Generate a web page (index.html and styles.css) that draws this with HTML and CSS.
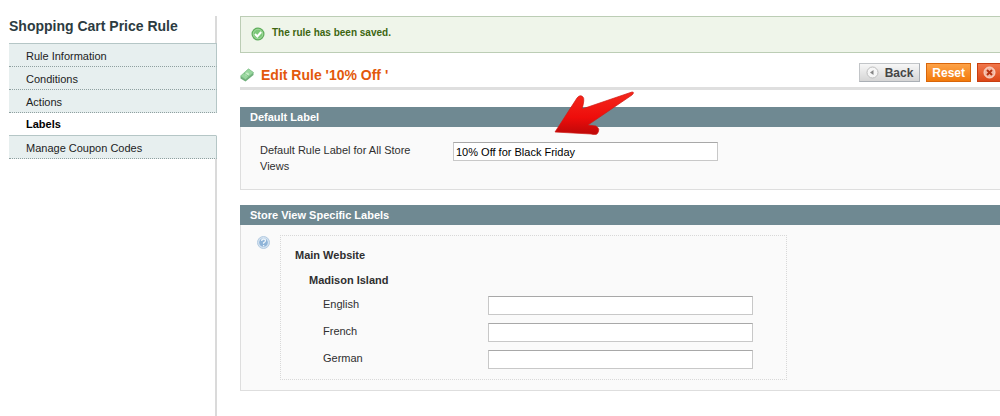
FILE: index.html
```html
<!DOCTYPE html>
<html lang="en">
<head>
    <meta charset="UTF-8">
    <meta name="viewport" content="width=device-width, initial-scale=1.0">
    <title>Edit Rule</title>
    <link rel="stylesheet" href="styles.css">
</head>
<body>
    <div class="page">
        <aside class="sidebar">
            <h3>Shopping Cart Price Rule</h3>
            <nav class="tabs">
                <a href="#">Rule Information</a>
                <a href="#">Conditions</a>
                <a href="#">Actions</a>
                <a href="#" class="active">Labels</a>
                <a href="#">Manage Coupon Codes</a>
            </nav>
        </aside>

        <main class="content">
            <div class="message">
                <svg width="14" height="14" viewBox="0 0 14 14">
                    <circle cx="7" cy="7" r="6.5" fill="#5fae5c"/>
                    <circle cx="7" cy="7" r="4.8" fill="#7cc878" stroke="#a5dba0"/>
                    <path d="M4 7l2.3 2.4L10.2 5" fill="none" stroke="#fff" stroke-width="2"/>
                </svg>
                <span>The rule has been saved.</span>
            </div>

            <div class="content-header">
                <svg width="14" height="14" viewBox="0 0 14 14">
                    <path d="M.5 8.5L8.5 1l5 3.5V7l-8 6.5-5-3z" fill="#6fae7a"/>
                    <path d="M.5 8L8.5.8l5 3.7-8 7z" fill="#98d69e" stroke="#7dbd86" stroke-width=".6"/>
                    <ellipse cx="7" cy="6.2" rx="2" ry="1.6" fill="#c4ecc4"/>
                    <path d="M4 5l5 3.6" stroke="#6fb679" stroke-width=".7"/>
                </svg>
                <h2>Edit Rule '10% Off '</h2>
                <div class="actions">
                    <button type="button" class="btn back">
                        <svg width="13" height="13" viewBox="0 0 13 13">
                            <circle cx="6.5" cy="6.5" r="5.5" fill="#f6f6f6" stroke="#bdbdbd"/>
                            <path d="M4 6.5L7.5 4v5z" fill="#858585"/>
                        </svg>
                        Back
                    </button>
                    <button type="button" class="btn reset">Reset</button>
                    <button type="button" class="btn delete" aria-label="Delete">
                        <svg width="13" height="13" viewBox="0 0 13 13">
                            <circle cx="6.5" cy="6.5" r="5.5" fill="#f3b7a2" stroke="#fbd9cd"/>
                            <path d="M4 4l5 5M9 4L4 9" stroke="#b5300f" stroke-width="2"/>
                        </svg>
                    </button>
                </div>
            </div>

            <section class="panel">
                <h4>Default Label</h4>
                <div class="panel-body default-label">
                    <label for="default_label">Default Rule Label for All Store Views</label>
                    <input type="text" id="default_label" value="10% Off for Black Friday">
                </div>
                <svg class="arrow" width="82" height="46" viewBox="0 0 82 46">
                    <defs>
                        <linearGradient id="red" x1="0" y1="0" x2="0" y2="1">
                            <stop offset="0" stop-color="#f5281c"/>
                            <stop offset=".6" stop-color="#ee0d0b"/>
                            <stop offset="1" stop-color="#bd0808"/>
                        </linearGradient>
                    </defs>
                    <path d="M2 42L24 8Q27 4 30 7Q32 9 29 19L79 2Q82 2 79 5L35 35L43 36Q48 39 44 44Q42 45 38 44Z" fill="url(#red)" stroke="#cf1a14" stroke-width=".7"/>
                </svg>
            </section>

            <section class="panel">
                <h4>Store View Specific Labels</h4>
                <div class="panel-body store-labels">
                    <svg width="13" height="13" viewBox="0 0 13 13">
                        <circle cx="6.5" cy="6.5" r="6" fill="#d3e2f0" stroke="#b3cae0"/>
                        <circle cx="6.5" cy="6.5" r="4.3" fill="#8fb4d8"/>
                        <path d="M4.7 5q0-2 1.900-2t1.900 1.800q0 1-1.900 2v1M6.600 9v1.200" fill="none" stroke="#eef5fb" stroke-width="1.300"/>
                    </svg>
                    <div class="store-box">
                        <h5>Main Website</h5>
                        <h6>Madison Island</h6>
                        <div class="row">
                            <label for="label_en">English</label>
                            <input type="text" id="label_en">
                        </div>
                        <div class="row">
                            <label for="label_fr">French</label>
                            <input type="text" id="label_fr">
                        </div>
                        <div class="row">
                            <label for="label_de">German</label>
                            <input type="text" id="label_de">
                        </div>
                    </div>
                </div>
            </section>
        </main>
    </div>
</body>
</html>
```

FILE: styles.css
```css
* {
    box-sizing: border-box;
}
body {
    margin: 0;
    padding: 16px 0 0 9px;
    background: #fff;
    color: #2f2f2f;
    font: 11px/16px "Liberation Sans", Arial, sans-serif;
}
h2, h3, h4, h5, h6 {
    margin: 0;
}
svg {
    flex: none;
}
.page {
    display: flex;
    gap: 23px;
    min-height: calc(100vh - 16px);
}
.sidebar {
    flex: none;
    width: 208px;
    border-right: 2px solid #dadada;
}
.sidebar h3 {
    padding-bottom: 7px;
    color: #2c3b41;
    font-size: 14px;
    line-height: 20px;
}
.tabs {
    margin-right: -2px;
    border-top: 1px solid #b5c6c6;
}
.tabs a {
    display: block;
    padding: 4px 17px 2px;
    border-right: 1px solid #b5c6c6;
    border-bottom: 1px dotted #8fa0a0;
    background: #e7efef;
    color: #1c2223;
    text-decoration: none;
}
.tabs .active {
    padding: 3px 17px;
    border-right-color: #fff;
    border-bottom: 1px solid #b5c6c6;
    background: #fff;
    color: #000;
    font-weight: bold;
}
.content {
    flex: 1;
    min-width: 0;
}
.message {
    display: flex;
    gap: 7px;
    padding: 9px 10px;
    border: 1px solid #bccdb5;
    border-right: 0;
    background: #eff5ea;
    color: #3d6611;
    font-size: 10px;
    font-weight: bold;
}
.message span {
    padding-bottom: 3px;
    line-height: 14px;
}
.message svg {
    margin-top: 1px;
}
.content-header {
    display: flex;
    align-items: center;
    gap: 7px;
    margin-top: 10px;
    border-bottom: 3px solid #dfdfdf;
}
.content-header h2 {
    color: #e3580b;
    font-size: 14px;
    line-height: 24px;
}
.actions {
    display: flex;
    align-self: flex-start;
    gap: 6px;
    margin-left: auto;
}
.btn {
    display: flex;
    align-items: center;
    height: 19px;
    padding: 0 5px;
    border: 1px solid #d9660a;
    background: linear-gradient(#fda247, #f27a0c);
    color: #fff;
    font: bold 12px "Liberation Sans", Arial, sans-serif;
}
.back {
    gap: 6px;
    padding: 0 6px;
    border-color: #c2c5c8 #aaafb5 #aaafb5 #c2c5c8;
    background: linear-gradient(#f7f7f7, #d5d5d5);
    color: #454545;
}
.delete {
    padding: 0 4px 0 5px;
    border-color: #c83d10;
    border-right: 0;
    background: linear-gradient(#f0764a, #dc4617);
}
.panel {
    position: relative;
    margin-top: 17px;
}
.panel + .panel {
    margin-top: 15px;
}
.panel h4 {
    padding: 2px 10px;
    background: #6f8992;
    color: #fff;
    font-size: 11px;
}
.panel-body {
    border: 1px solid #dedede;
    border-top: 0;
    border-right: 0;
    background: #fafafa;
}
.default-label {
    display: flex;
    align-items: flex-start;
    padding: 15px 19px;
}
.default-label label {
    width: 193px;
    padding-right: 25px;
}
input {
    width: 265px;
    height: 19px;
    padding: 0 2px;
    border: 1px solid #c8c8c8;
    border-top-color: #a8a8a8;
    background: #fff;
    color: #000;
    font: 11px "Liberation Sans", Arial, sans-serif;
}
.arrow {
    position: absolute;
    top: -17px;
    left: 313px;
}
.store-labels {
    display: flex;
    gap: 10px;
    padding: 10px 16px;
}
.store-box {
    width: 507px;
    padding: 11px 14px 10px;
    border: 1px dotted #d8d8d8;
}
.store-labels > svg {
    margin-top: 1px;
}
.store-box h5,
.store-box h6 {
    margin-bottom: 9px;
    font-size: 11px;
}
.store-box h6 {
    padding-left: 14px;
    margin-bottom: 8px;
}
.row {
    display: flex;
    align-items: flex-start;
    padding-left: 28px;
}
.row + .row {
    margin-top: 8px;
}
.row label {
    width: 165px;
}
```
